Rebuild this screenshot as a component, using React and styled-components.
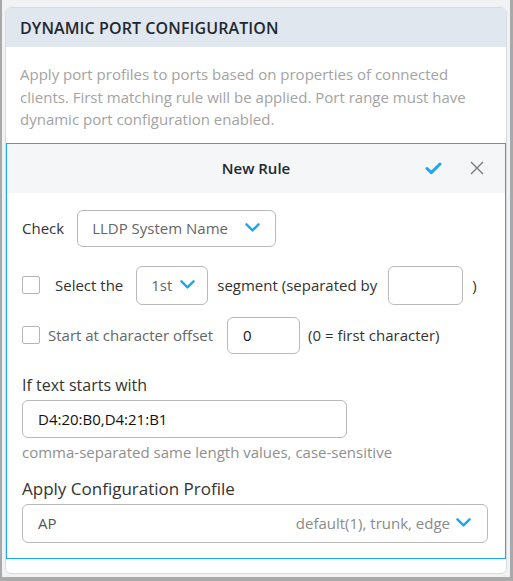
import styled, { createGlobalStyle } from "styled-components";

const GlobalStyle = createGlobalStyle`
  html, body {
    margin: 0;
    padding: 0;
  }
  body {
    font-family: "Open Sans", "Noto Sans", sans-serif;
    background: #a9a9a9;
  }
  * { box-sizing: border-box; }
`;

const Frame = styled.div`
  width: 513px;
  height: 581px;
  padding: 0 3px 4px 2px;
`;

const Page = styled.div`
  height: 100%;
  background: #f1f2f4;
  padding: 7px 3px 3px 3px;
`;

const Card = styled.div`
  background: #fff;
  border: 1px solid #d6dce4;
  border-radius: 6px;
  height: 567px;
  overflow: hidden;
`;

const CardHeader = styled.div`
  background: #e1e7ef;
  height: 39px;
  display: flex;
  align-items: center;
  padding-left: 14px;
  font-size: 16px;
  font-weight: 600;
  color: #222831;
  letter-spacing: 0.1px;
`;

const Description = styled.p`
  margin: 0;
  padding: 16px 14px 12px 14px;
  font-size: 15px;
  line-height: 22.5px;
  color: #a3a3a3;
`;

const RulePanel = styled.div`
  border: 1px solid #1eaaf1;
`;

const RuleHeader = styled.div`
  position: relative;
  height: 49px;
  background: #f5f6f8;
  display: flex;
  align-items: center;
  justify-content: center;
  font-size: 15px;
  font-weight: 600;
  color: #222831;
`;

const HeaderActions = styled.div`
  position: absolute;
  right: 21px;
  top: 0;
  height: 100%;
  display: flex;
  align-items: center;
  gap: 28px;
`;

const RuleBody = styled.div`
  padding: 17px 16px 15px 15px;
  display: flex;
  flex-direction: column;
`;

const Row = styled.div`
  display: flex;
  align-items: center;
  margin-top: ${(p) => p.$top || 0}px;
  font-size: 15px;
  color: #333;
`;

const Text = styled.span`
  color: ${(p) => (p.$muted ? "#666" : "#333")};
  margin-left: ${(p) => p.$left || 0}px;
  margin-right: ${(p) => p.$right || 0}px;
  white-space: nowrap;
`;

const SelectBox = styled.div`
  display: flex;
  align-items: center;
  justify-content: space-between;
  width: ${(p) => p.$width}px;
  height: ${(p) => p.$height || 37}px;
  border: 1px solid #b9b9b9;
  border-radius: 6px;
  padding: 0 ${(p) => p.$padRight || 14}px 0 ${(p) => p.$padLeft || 15}px;
  color: #666;
  font-size: 15px;
  background: #fff;
`;

const InputBox = styled.div`
  display: flex;
  align-items: center;
  width: ${(p) => p.$width}px;
  height: ${(p) => p.$height || 37}px;
  border: 1px solid #b9b9b9;
  border-radius: 6px;
  padding-left: ${(p) => p.$padLeft || 15}px;
  color: #111;
  font-size: 15px;
  background: #fff;
`;

const CheckBox = styled.span`
  display: inline-block;
  width: 18px;
  height: 18px;
  border: 1px solid #b5b5b5;
  border-radius: 2px;
  background: #fff;
  flex-shrink: 0;
`;

const FieldLabel = styled.div`
  font-size: ${(p) => p.$size || 16}px;
  color: #333;
  margin-top: ${(p) => p.$top || 0}px;
  margin-bottom: ${(p) => p.$bottom || 4}px;
`;

const Hint = styled.div`
  font-size: 15px;
  line-height: 20px;
  color: #8f8f8f;
  margin-top: 4px;
`;

const ProfileRight = styled.span`
  display: flex;
  align-items: center;
  gap: 6px;
  color: #8a8a8a;
`;

const ProfileName = styled.span`
  color: #555;
`;

const Chevron = ({ size = 15 }) => (
  <svg width={size} height={size * 0.62} viewBox="0 0 16 10" fill="none">
    <path d="M1.5 1.5 L8 8 L14.5 1.5" stroke="#1ea7ee" strokeWidth="2.6" strokeLinecap="round" strokeLinejoin="round" />
  </svg>
);

const CheckIcon = () => (
  <svg width="17" height="13" viewBox="0 0 17 13" fill="none">
    <path d="M2 6.5 L6.3 10.6 L15 2" stroke="#1ea7ee" strokeWidth="3" strokeLinecap="round" strokeLinejoin="round" />
  </svg>
);

const CloseIcon = () => (
  <svg width="14" height="14" viewBox="0 0 14 14" fill="none">
    <path d="M1 1 L13 13 M13 1 L1 13" stroke="#777" strokeWidth="1.3" />
  </svg>
);

export default function App() {
  return (
    <Frame>
      <GlobalStyle />
      <Page>
        <Card>
          <CardHeader>DYNAMIC PORT CONFIGURATION</CardHeader>
          <Description>
            Apply port profiles to ports based on properties of connected
            clients. First matching rule will be applied. Port range must have
            dynamic port configuration enabled.
          </Description>
          <RulePanel>
            <RuleHeader>
              New Rule
              <HeaderActions>
                <CheckIcon />
                <CloseIcon />
              </HeaderActions>
            </RuleHeader>
            <RuleBody>
              <Row>
                <Text $right={13}>Check</Text>
                <SelectBox $width={199} $padLeft={14} $padRight={15}>
                  LLDP System Name
                  <Chevron />
                </SelectBox>
              </Row>
              <Row $top={19}>
                <CheckBox />
                <Text $left={15} $right={13}>Select the</Text>
                <SelectBox $width={72} $height={39} $padLeft={14} $padRight={12}>
                  1st
                  <Chevron />
                </SelectBox>
                <Text $left={9} $right={11}>segment (separated by</Text>
                <InputBox $width={75} $height={39} />
                <Text $left={9}>)</Text>
              </Row>
              <Row $top={12}>
                <CheckBox />
                <Text $muted $left={8} $right={14}>Start at character offset</Text>
                <InputBox $width={73}>0</InputBox>
                <Text $left={8}>(0 = first character)</Text>
              </Row>
              <FieldLabel $top={20}>If text starts with</FieldLabel>
              <InputBox $width={325} $height={38}>D4:20:B0,D4:21:B1</InputBox>
              <Hint>comma-separated same length values, case-sensitive</Hint>
              <FieldLabel $size={17} $top={15}>Apply Configuration Profile</FieldLabel>
              <SelectBox $width={466} $height={39} $padRight={16}>
                <ProfileName>AP</ProfileName>
                <ProfileRight>
                  default(1), trunk, edge
                  <Chevron />
                </ProfileRight>
              </SelectBox>
            </RuleBody>
          </RulePanel>
        </Card>
      </Page>
    </Frame>
  );
}
